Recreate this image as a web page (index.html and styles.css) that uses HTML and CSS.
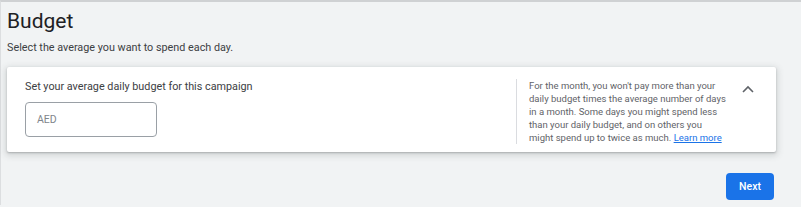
FILE: index.html
```html
<!DOCTYPE html>
<html>
<head>
<meta charset="utf-8">
<link rel="stylesheet" href="styles.css">
</head>
<body>
<div class="page">
  <h1 class="title">Budget</h1>
  <p class="subtitle">Select the average you want to spend each day.</p>
  <div class="card">
    <div class="main">
      <div class="label">Set your average daily budget for this campaign</div>
      <div class="input"><span class="currency">AED</span></div>
    </div>
    <div class="help">For the month, you won't pay more than your daily budget times the average number of days in a month. Some days you might spend less than your daily budget, and on others you might spend up to twice as much. <a class="link" href="#">Learn more</a></div>
    <div class="toggle">
      <svg width="12" height="8" viewBox="0 0 12 8"><path d="M1 7 L6 2 L11 7" fill="none" stroke="#5f6368" stroke-width="1.6"/></svg>
    </div>
  </div>
  <div class="actions">
    <button class="next">Next</button>
  </div>
</div>
</body>
</html>
```
FILE: styles.css
```css
html, body {
  margin: 0;
  padding: 0;
  background: #f1f3f4;
}
body {
  font-family: Roboto, "Noto Sans", Arial, sans-serif;
  width: 801px;
  height: 207px;
  overflow: hidden;
}
.page {
  border-top: 2px solid #cfd1d3;
  border-left: 1px solid #dcdee0;
  height: 205px;
  box-sizing: border-box;
  padding: 0 25px 0 6px;
}
.title {
  margin: 5px 0 0 0;
  font-size: 21px;
  line-height: 28px;
  font-weight: 400;
  color: #202124;
}
.subtitle {
  margin: 5px 0 0 0;
  font-size: 10.8px;
  line-height: 16px;
  color: #3c4043;
}
.card {
  margin-top: 11px;
  height: 85px;
  box-sizing: border-box;
  background: #fff;
  border-radius: 2px;
  box-shadow: 0 1px 2px rgba(60,64,67,0.3), 0 2px 6px 2px rgba(60,64,67,0.15);
  display: flex;
  padding: 12px 0 0 18px;
}
.main {
  flex: 1;
}
.label {
  font-size: 10.8px;
  line-height: 16px;
  color: #3c4043;
}
.input {
  margin-top: 7px;
  width: 132px;
  height: 35px;
  box-sizing: border-box;
  border: 1px solid #9aa0a6;
  border-radius: 4px;
  display: flex;
  align-items: center;
  padding-left: 11px;
}
.currency {
  font-size: 10.5px;
  color: #80868b;
}
.help {
  width: 198px;
  border-left: 1px solid #dadce0;
  padding-left: 12px;
  font-size: 9.5px;
  line-height: 13px;
  color: #5f6368;
  align-self: flex-start;
}
.link {
  color: #1a73e8;
  text-decoration: underline;
}
.toggle {
  padding: 6px 22px 0 15px;
}
.toggle svg {
  display: block;
}
.actions {
  display: flex;
  justify-content: flex-end;
  margin-top: 21px;
  padding-right: 2px;
}
.next {
  width: 48px;
  height: 27px;
  border: none;
  border-radius: 4px;
  background: #1a73e8;
  color: #fff;
  font-family: Roboto, "Noto Sans", Arial, sans-serif;
  font-size: 10.5px;
  font-weight: 500;
  padding: 0;
}
```
